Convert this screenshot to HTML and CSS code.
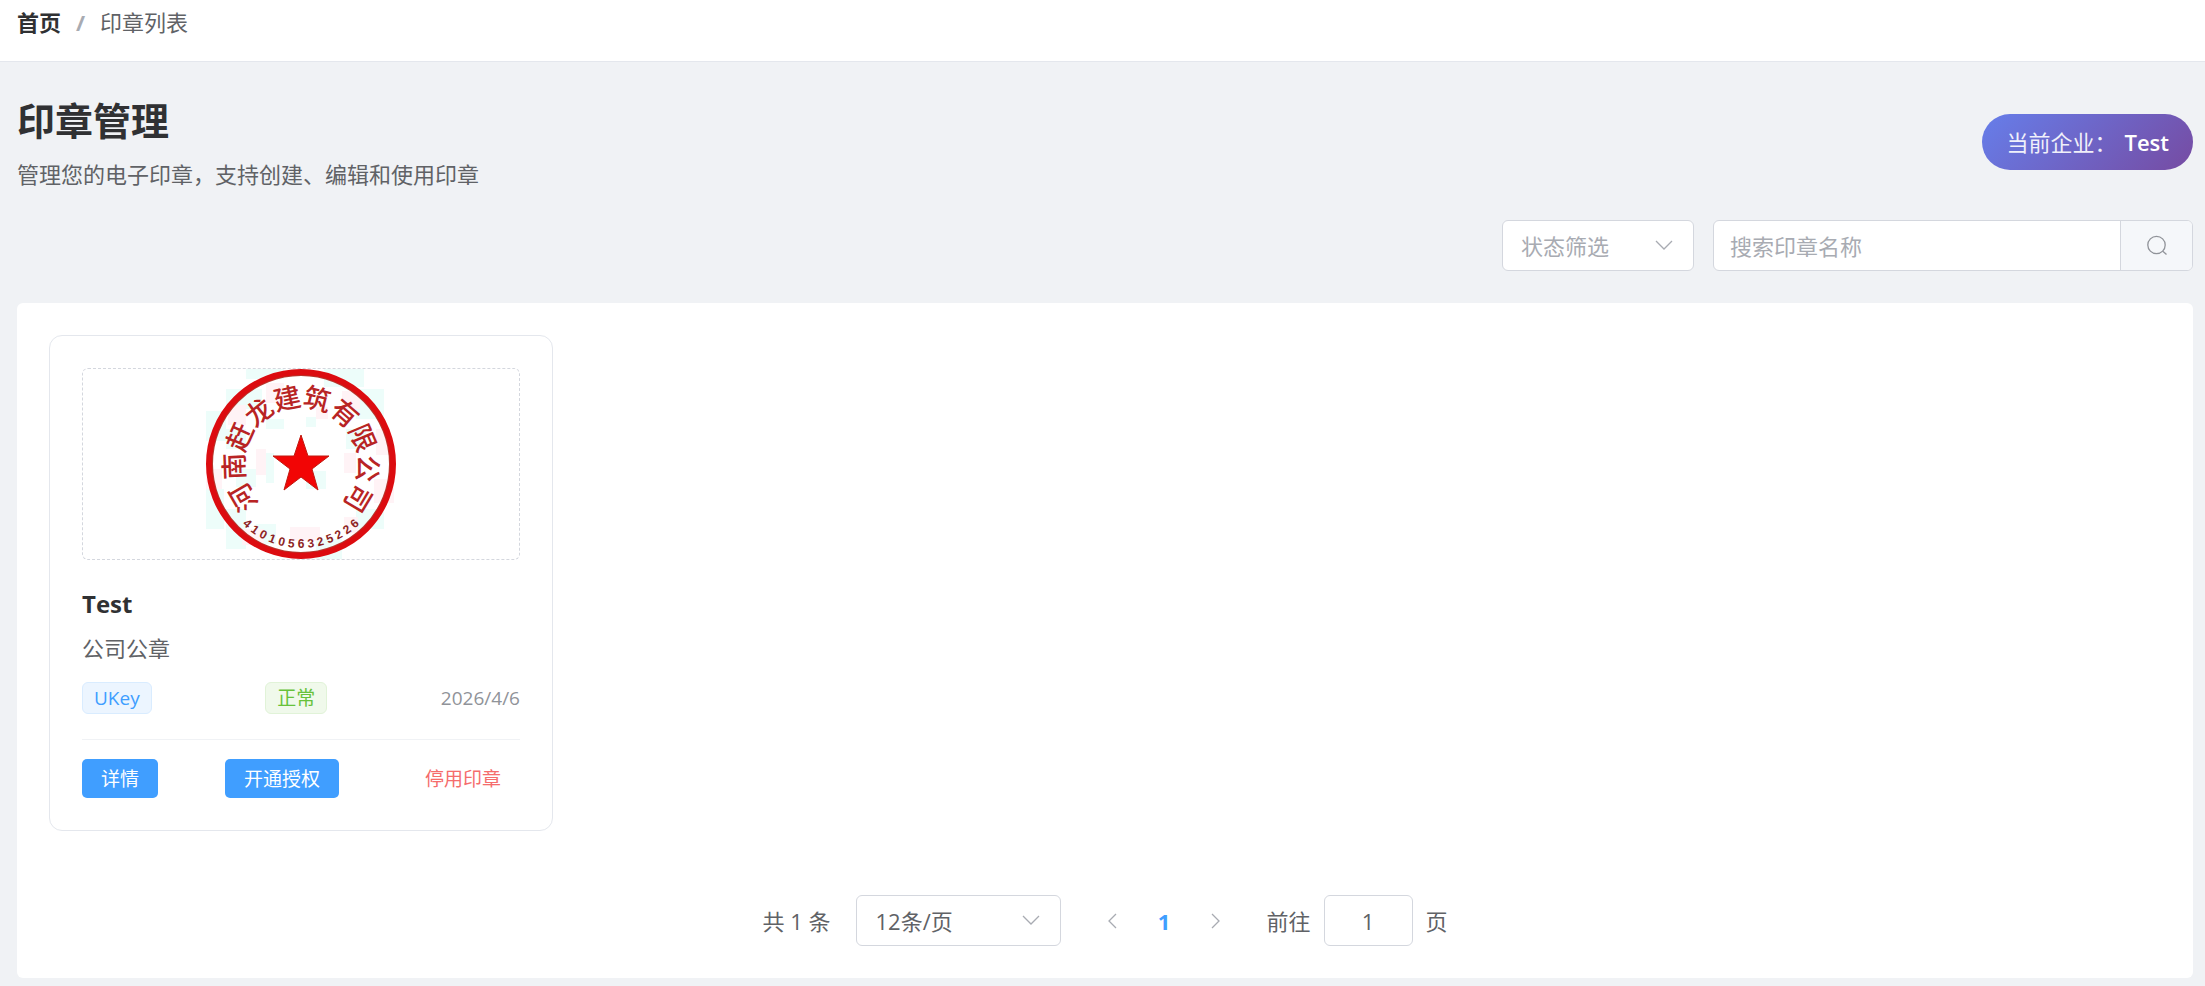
FILE: index.html
```html
<!DOCTYPE html>
<html lang="zh-CN">
<head>
  <meta charset="UTF-8" />
  <meta name="viewport" content="width=device-width, initial-scale=1.0" />
  <title>印章管理</title>
  <link rel="stylesheet" href="styles.css">
</head>
<body>
  <nav class="breadcrumb" aria-label="面包屑">
    <a class="breadcrumb-home" href="#">首页</a>
    <span class="breadcrumb-separator">/</span>
    <span>印章列表</span>
  </nav>

  <main class="page">
    <header class="page-header">
      <div>
        <h1 class="page-title">印章管理</h1>
        <p class="page-desc">管理您的电子印章，支持创建、编辑和使用印章</p>
      </div>
      <div class="company-badge">
        <span class="company-label">当前企业：</span>
        <strong class="company-name">Test</strong>
      </div>
    </header>

    <form class="toolbar">
      <div class="select-box status-filter">
        <select class="placeholder" aria-label="状态筛选">
          <option>状态筛选</option>
        </select>
        <svg class="select-arrow" viewBox="0 0 22 22"><path d="M3 7l8 8 8-8" /></svg>
      </div>
      <div class="search-box">
        <input type="text" placeholder="搜索印章名称" aria-label="搜索印章名称" />
        <button type="button" aria-label="搜索">
          <svg class="search-icon" viewBox="0 0 22 22"><circle cx="10.5" cy="10" r="8.7" /><path d="M16.8 16.2l3.7 3.3" /></svg>
        </button>
      </div>
    </form>

    <section class="content">
      <div class="seal-grid">
        <article class="seal-card">
          <div class="seal-preview">
            <svg class="seal-image" viewBox="0 0 190 190" role="img" aria-label="公司公章">
              <!-- 底纹 -->
              <g class="tint-cyan">
                <path d="M40 0h38v10H40zM118 0h40v18h-40zM20 20h36v20H20zM150 20h28v30h-28zM0 42h20v30H0zM20 60h20v20H20zM60 50h18v10H60zM100 48h10v10h-10zM140 60h20v20h-20zM0 120h18v40H0zM20 140h20v40H20zM150 140h28v20h-28zM50 155h20v20H50zM110 170h26v20h-26zM60 84h8v30h-8zM100 102h20v18h-20zM30 100h20v18H30z" />
              </g>
              <g class="tint-pink">
                <path d="M22 36h18v20H22zM60 14h18v20H60zM110 38h12v12h-12zM136 22h18v18h-18zM170 60h14v26h-14zM0 100h16v20H0zM168 110h20v24h-20zM36 160h22v16H36zM84 158h30v14H84zM50 80h10v26H50zM138 84h12v20h-12zM138 148h14v16h-14z" />
              </g>
              <circle class="seal-ring-edge" cx="95" cy="95" r="91" />
              <circle class="seal-ring" cx="95" cy="95" r="92" />
              <path class="seal-star" d="M95 66l7 21h21l-17 13 6 21-17-13-17 13 6-21-17-13h21z" />
              <g class="seal-text">
                <text x="95" y="38" transform="rotate(-120 95 95)">河</text>
                <text x="95" y="38" transform="rotate(-92 95 95)">南</text>
                <text x="95" y="38" transform="rotate(-66 95 95)">赶</text>
                <text x="95" y="38" transform="rotate(-39 95 95)">龙</text>
                <text x="95" y="38" transform="rotate(-12 95 95)">建</text>
                <text x="95" y="38" transform="rotate(14 95 95)">筑</text>
                <text x="95" y="38" transform="rotate(41 95 95)">有</text>
                <text x="95" y="38" transform="rotate(67 95 95)">限</text>
                <text x="95" y="38" transform="rotate(94 95 95)">公</text>
                <text x="95" y="38" transform="rotate(121 95 95)">司</text>
              </g>
              <g class="seal-code">
                <text x="95" y="179" transform="rotate(42 95 95)">4</text>
                <text x="95" y="179" transform="rotate(35 95 95)">1</text>
                <text x="95" y="179" transform="rotate(28 95 95)">0</text>
                <text x="95" y="179" transform="rotate(21 95 95)">1</text>
                <text x="95" y="179" transform="rotate(14 95 95)">0</text>
                <text x="95" y="179" transform="rotate(7 95 95)">5</text>
                <text x="95" y="179">6</text>
                <text x="95" y="179" transform="rotate(-7 95 95)">3</text>
                <text x="95" y="179" transform="rotate(-14 95 95)">2</text>
                <text x="95" y="179" transform="rotate(-21 95 95)">5</text>
                <text x="95" y="179" transform="rotate(-28 95 95)">2</text>
                <text x="95" y="179" transform="rotate(-35 95 95)">2</text>
                <text x="95" y="179" transform="rotate(-42 95 95)">6</text>
              </g>
            </svg>
          </div>
          <h2 class="seal-name">Test</h2>
          <p class="seal-type">公司公章</p>
          <div class="seal-meta">
            <span class="tag tag-primary">UKey</span>
            <span class="tag tag-success">正常</span>
            <time class="seal-date" datetime="2026-04-06">2026/4/6</time>
          </div>
          <div class="seal-actions">
            <button type="button" class="btn btn-primary">详情</button>
            <button type="button" class="btn btn-primary">开通授权</button>
            <button type="button" class="btn btn-danger-text">停用印章</button>
          </div>
        </article>
      </div>

      <div class="pagination">
        <span>共 1 条</span>
        <div class="select-box page-size">
          <select aria-label="每页条数">
            <option>12条/页</option>
          </select>
          <svg class="select-arrow" viewBox="0 0 22 22"><path d="M3 7l8 8 8-8" /></svg>
        </div>
        <div class="pager">
          <button type="button" aria-label="上一页" disabled>
            <svg viewBox="0 0 22 22"><path d="M14 4l-7 7 7 7" /></svg>
          </button>
          <button type="button" class="active">1</button>
          <button type="button" aria-label="下一页" disabled>
            <svg viewBox="0 0 22 22"><path d="M8 4l7 7-7 7" /></svg>
          </button>
        </div>
        <div class="jumper">
          <label for="page-input">前往</label>
          <input id="page-input" type="text" value="1" />
          <span>页</span>
        </div>
      </div>
    </section>
  </main>
</body>
</html>
```

FILE: styles.css
```css
* {
  box-sizing: border-box;
}

body {
  margin: 0;
  font-family: "Open Sans", "Noto Sans CJK SC", sans-serif;
  font-size: 22px;
  line-height: 32px;
  color: #606266;
  background: #f0f2f5;
}

h1, h2, p {
  margin: 0;
}

button, input, select {
  font: inherit;
  color: inherit;
}

svg {
  fill: none;
  stroke: #a8abb2;
  stroke-width: 1.3;
}

/* 面包屑 */
.breadcrumb {
  display: flex;
  gap: 15px;
  height: 62px;
  padding: 6px 17px;
  background: #fff;
  border-bottom: 1px solid #e4e7ed;
}

.breadcrumb-home {
  color: #303133;
  font-weight: bold;
  text-decoration: none;
}

.breadcrumb-separator {
  color: #a8abb2;
  font-weight: bold;
}

/* 页面头部 */
.page {
  padding: 32px 12px 8px 17px;
}

.page-header {
  display: flex;
  justify-content: space-between;
  align-items: center;
  margin-bottom: 30px;
}

.page-title {
  font-size: 38px;
  line-height: 52px;
  color: #303133;
}

.page-desc {
  margin-top: 12px;
}

.company-badge {
  display: flex;
  gap: 8px;
  padding: 12px 24px;
  border-radius: 28px;
  color: #fff;
  background: linear-gradient(135deg, #667eea 0%, #764ba2 100%);
}

.company-label {
  opacity: 0.9;
}

.company-name {
  font-weight: 600;
}

/* 筛选栏 */
.toolbar {
  display: flex;
  justify-content: flex-end;
  gap: 19px;
  margin-bottom: 32px;
}

.select-box {
  position: relative;
  height: 51px;
}

.select-box select {
  width: 100%;
  height: 100%;
  padding: 0 18px;
  border: 1px solid #d4d7de;
  border-radius: 6px;
  background: #fff;
  appearance: none;
}

.select-box .placeholder {
  color: #a8abb2;
}

.select-arrow {
  position: absolute;
  top: 14px;
  right: 19px;
  width: 22px;
  height: 22px;
  pointer-events: none;
}

.status-filter {
  width: 192px;
}

.search-box {
  display: flex;
  width: 480px;
  height: 51px;
  border: 1px solid #d4d7de;
  border-radius: 6px;
  background: #fff;
  overflow: hidden;
}

.search-box input {
  flex: 1;
  min-width: 0;
  padding: 0 16px;
  border: none;
  background: none;
}

.search-box input::placeholder {
  color: #a8abb2;
}

.search-box button {
  display: flex;
  align-items: center;
  justify-content: center;
  width: 72px;
  padding: 0;
  border: none;
  border-left: 1px solid #d4d7de;
  background: #f5f7fa;
}

.search-icon {
  width: 22px;
  height: 22px;
  stroke: #909399;
}

/* 印章列表 */
.content {
  padding: 32px;
  border-radius: 6px;
  background: #fff;
}

.seal-grid {
  display: grid;
  grid-template-columns: repeat(auto-fill, minmax(480px, 1fr));
  gap: 32px;
}

.seal-card {
  padding: 32px;
  border: 1px solid #e4e7ed;
  border-radius: 13px;
}

.seal-preview {
  display: flex;
  justify-content: center;
  margin-bottom: 24px;
  border: 1px dashed #d4d7de;
  border-radius: 6px;
}

.seal-image {
  width: 190px;
  height: 190px;
  stroke: none;
}

.tint-cyan {
  fill: #edfdfa;
}

.tint-pink {
  fill: #fff3f6;
}

.seal-ring {
  stroke: #dc0c10;
  stroke-width: 6;
}

.seal-ring-edge {
  stroke: #b5382e;
  stroke-width: 6;
}

.seal-star {
  fill: #f20505;
  stroke: #c01a10;
  stroke-width: 1;
}

.seal-text {
  font-family: "Noto Sans CJK SC", sans-serif;
  font-size: 27px;
  font-weight: 500;
  text-anchor: middle;
  fill: #b82424;
}

.seal-code {
  font-family: "Liberation Sans", sans-serif;
  font-size: 12px;
  font-weight: bold;
  text-anchor: middle;
  fill: #8c2424;
}

.seal-name {
  font-size: 24px;
  line-height: 40px;
  font-weight: bold;
  color: #303133;
}

.seal-type {
  margin-top: 8px;
}

.seal-meta {
  display: flex;
  justify-content: space-between;
  align-items: center;
  margin-top: 18px;
  padding-bottom: 25px;
  border-bottom: 1px solid #f0f2f5;
  font-size: 19px;
}

.tag {
  height: 32px;
  padding: 0 11px;
  line-height: 30px;
  border: 1px solid;
  border-radius: 6px;
}

.tag-primary {
  color: #409eff;
  border-color: #d9ecff;
  background: #ecf5ff;
}

.tag-success {
  color: #67c23a;
  border-color: #e1f3d8;
  background: #f0f9eb;
}

.seal-date {
  color: #909399;
}

.seal-actions {
  display: flex;
  justify-content: space-between;
  padding-top: 19px;
}

.btn {
  height: 39px;
  padding: 0 19px;
  border: none;
  border-radius: 5px;
  font-size: 19px;
  cursor: pointer;
}

.btn-primary {
  color: #fff;
  background: #409eff;
}

.btn-danger-text {
  color: #f56c6c;
  background: none;
}

/* 分页 */
.pagination {
  display: flex;
  justify-content: center;
  align-items: center;
  gap: 26px;
  margin-top: 64px;
}

.page-size {
  width: 205px;
}

.pager {
  display: flex;
}

.pager button {
  display: flex;
  align-items: center;
  justify-content: center;
  width: 51px;
  height: 51px;
  padding: 0;
  border: none;
  background: none;
}

.pager svg {
  width: 22px;
  height: 22px;
}

.pager .active {
  color: #409eff;
  font-weight: bold;
}

.jumper {
  display: flex;
  align-items: center;
  gap: 13px;
}

.jumper input {
  width: 89px;
  height: 51px;
  padding: 0 16px;
  border: 1px solid #d4d7de;
  border-radius: 6px;
  text-align: center;
}
```
